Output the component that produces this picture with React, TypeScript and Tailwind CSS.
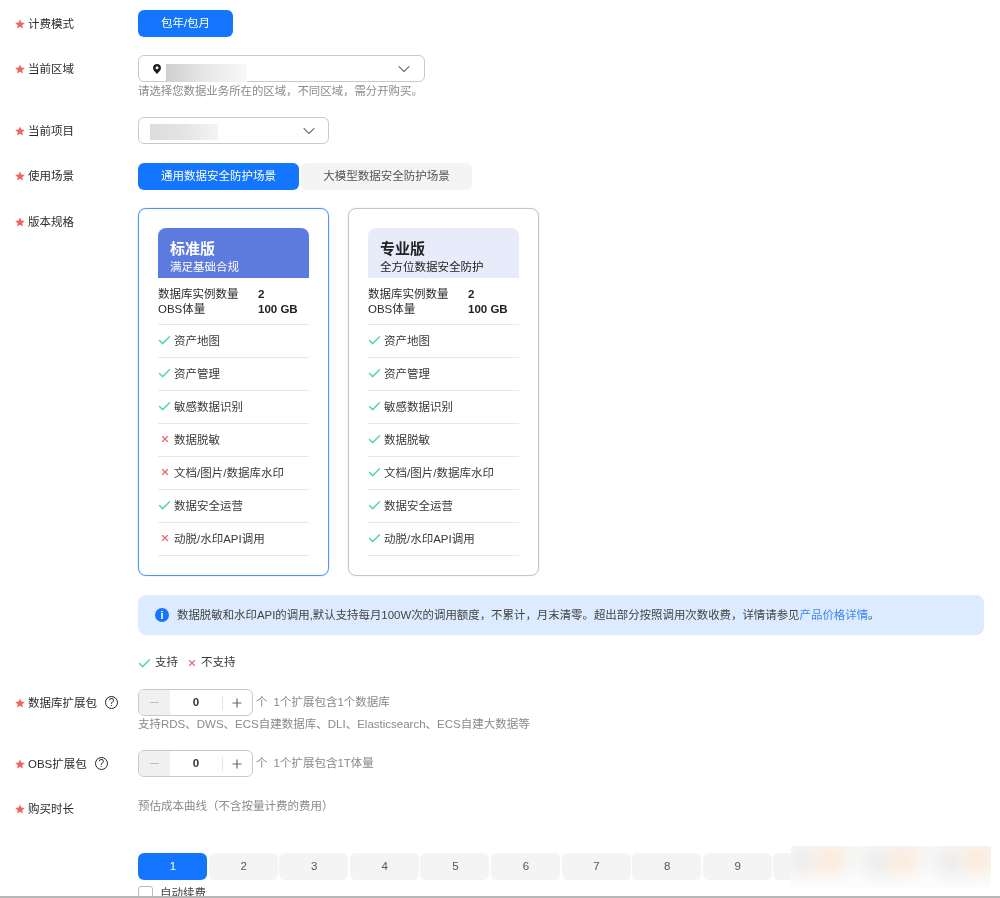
import React from "react";
import { Check, X, ChevronDown, Minus, Plus } from "lucide-react";

const font = "font-['Liberation_Sans','Noto_Sans_CJK_SC',sans-serif]";

function Star() {
  return (
    <svg width="10" height="10" viewBox="0 0 24 24" className="shrink-0 mr-[2px]">
      <path d="M12 1l3.2 7.6 8.3.7-6.3 5.4 1.9 8.1L12 18.5l-7.1 4.3 1.9-8.1L.5 9.3l8.3-.7z" fill="#f4645f" />
    </svg>
  );
}

function Label({ text, help }: { text: string; help?: boolean }) {
  return (
    <div className="w-[138px] shrink-0 pl-[15px] flex items-center text-[11.5px] leading-[16px] text-[#2b2b2b]">
      <Star />
      <span className="ml-[1px] whitespace-nowrap">{text}</span>
      {help && (
        <span className="ml-[8px] w-[13px] h-[13px] rounded-full border border-[#222] flex items-center justify-center text-[10px] leading-none">?</span>
      )}
    </div>
  );
}

const features = ["资产地图", "资产管理", "敏感数据识别", "数据脱敏", "文档/图片/数据库水印", "数据安全运营", "动脱/水印API调用"];

function Yes() {
  return <Check size={15} strokeWidth={2.4} className="text-[#5dd5a8] shrink-0" />;
}
function No() {
  return <X size={10} strokeWidth={2.6} className="text-[#e8636b] shrink-0" />;
}

function Card({ title, sub, active, yes }: { title: string; sub: string; active: boolean; yes: boolean[] }) {
  return (
    <div className={`w-[191px] h-[368px] rounded-[8px] border px-[19px] pt-[19px] ${active ? "border-[#4d94ff] shadow-[0_0_1px_#4d94ff]" : "border-[#c4c4c4] shadow-[0_0_1px_#c4c4c4]"}`}>
      <div className={`h-[50px] rounded-t-[8px] pl-[12px] pt-[11px] ${active ? "bg-[#5d7bdf] text-white" : "bg-[#e8ecfa] text-[#222]"}`}>
        <div className="text-[15px] leading-[20px] font-bold">{title}</div>
        <div className="text-[11.5px] leading-[16px] whitespace-nowrap">{sub}</div>
      </div>
      <div className="h-[47px] border-b border-[#e8e8e8] pt-[9px] text-[11.5px] leading-[15px] text-[#2b2b2b]">
        <div className="flex"><span className="w-[100px]">数据库实例数量</span><b className="text-[#222]">2</b></div>
        <div className="flex"><span className="w-[100px]">OBS体量</span><b className="text-[#222]">100 GB</b></div>
      </div>
      {features.map((f, i) => (
        <div key={f} className="h-[33px] border-b border-[#e8e8e8] flex items-center gap-[3px] text-[11.5px] text-[#3a3a3a]">
          <span className="w-[13px] flex justify-center pb-[2px]">{yes[i] ? <Yes /> : <No />}</span>
          <span className="whitespace-nowrap pt-[1px]">{f}</span>
        </div>
      ))}
    </div>
  );
}

function Stepper() {
  return (
    <div className="w-[115px] h-[27px] rounded-[6px] border border-[#c9c9c9] flex items-center overflow-hidden">
      <div className="w-[31px] h-full bg-[#f0f0f0] flex items-center justify-center"><Minus size={13} className="text-[#bbb]" /></div>
      <div className="w-[52px] text-center text-[11.5px] font-bold text-[#333]">0</div>
      <div className="w-px h-[14px] bg-[#e3e3e3]" />
      <div className="flex-1 flex items-center justify-center pr-[1px]"><Plus size={14} className="text-[#666]" /></div>
    </div>
  );
}

function Pin() {
  return (
    <svg width="8" height="10" viewBox="0 0 8 10" className="shrink-0">
      <path d="M4 0C1.8 0 0 1.7 0 3.9C0 6.2 2.6 8.4 4 10C5.4 8.4 8 6.2 8 3.9C8 1.7 6.2 0 4 0Z" fill="#1f1f1f" />
      <circle cx="4" cy="3.8" r="1.5" fill="#fff" />
    </svg>
  );
}

export default function App() {
  const nums = ["1", "2", "3", "4", "5", "6", "7", "8", "9"];
  return (
    <div className={`${font} relative h-[898px] w-[1000px] overflow-hidden bg-white flex flex-col`}>
      <div className="flex-1 overflow-hidden pt-[10px] blur-[0.3px]">
        <div className="flex items-center h-[27px]">
          <Label text="计费模式" />
          <div className="w-[95px] h-[27px] rounded-[6px] bg-[#1476ff] text-white text-[11.5px] flex items-center justify-center">包年/包月</div>
        </div>

        <div className="flex mt-[18px]">
          <div className="h-[28px] flex items-center"><Label text="当前区域" /></div>
          <div>
            <div className="w-[287px] h-[27px] rounded-[6px] border border-[#c9c9c9] flex items-center pl-[14px] pr-[10px]">
              <Pin />
              <div className="ml-[5px] w-[81px] h-[18px] mt-[9px] bg-gradient-to-r from-[#cfcfcf] via-[#e8e8e8] to-[#f8f8f8]" />
              <ChevronDown size={20} strokeWidth={1.3} className="ml-auto text-[#777]" />
            </div>
            <div className="mt-[1px] text-[11.4px] leading-[16px] text-[#8a8a8a] whitespace-nowrap">请选择您数据业务所在的区域，不同区域，需分开购买。</div>
          </div>
        </div>

        <div className="flex items-center mt-[18px]">
          <Label text="当前项目" />
          <div className="w-[191px] h-[27px] rounded-[6px] border border-[#c9c9c9] flex items-center pl-[11px] pr-[9px]">
            <div className="w-[68px] h-[16px] mt-[2px] bg-gradient-to-r from-[#dcdcdc] via-[#e4e4e4] to-[#f4f4f4]" />
            <ChevronDown size={20} strokeWidth={1.3} className="ml-auto text-[#777]" />
          </div>
        </div>

        <div className="flex mt-[19px]">
          <div className="h-[25px] flex items-center"><Label text="使用场景" /></div>
          <div className="w-[161px] h-[27px] rounded-[6px] bg-[#1476ff] text-white text-[11.5px] flex items-center justify-center">通用数据安全防护场景</div>
          <div className="ml-[2px] w-[171px] h-[27px] rounded-[6px] bg-[#f4f4f4] text-[#555] text-[11.5px] flex items-center justify-center">大模型数据安全防护场景</div>
        </div>

        <div className="flex mt-[18px]">
          <div className="h-[27px] flex items-center"><Label text="版本规格" /></div>
          <div className="flex gap-[19px]">
            <Card title="标准版" sub="满足基础合规" active yes={[true, true, true, false, false, true, false]} />
            <Card title="专业版" sub="全方位数据安全防护" active={false} yes={[true, true, true, true, true, true, true]} />
          </div>
        </div>

        <div className="ml-[138px] mt-[19px] w-[846px] h-[40px] rounded-[8px] bg-[#dcebff] flex items-center pl-[17px] text-[11.43px] text-[#444]">
          <span className="w-[14px] h-[14px] rounded-full bg-[#1476ff] text-white text-[11px] font-bold flex items-center justify-center">i</span>
          <span className="ml-[8px] pt-[1px] whitespace-nowrap">
            数据脱敏和水印API的调用,默认支持每月100W次的调用额度，不累计，月末清零。超出部分按照调用次数收费，详情请参见<span className="text-[#3d86f5]">产品价格详情</span>。
          </span>
        </div>

        <div className="ml-[137px] mt-[20px] h-[16px] flex items-center text-[11.5px] text-[#3a3a3a]">
          <Yes />
          <span className="ml-[3px]">支持</span>
          <span className="ml-[9px] pb-[1px]"><No /></span>
          <span className="ml-[4px]">不支持</span>
        </div>

        <div className="flex mt-[18px]">
          <div className="h-[27px] flex items-center"><Label text="数据库扩展包" help /></div>
          <div>
            <div className="flex items-center text-[11.5px] text-[#888]">
              <Stepper />
              <span className="ml-[3px]">个</span>
              <span className="ml-[6px]">1个扩展包含1个数据库</span>
            </div>
            <div className="text-[11.5px] leading-[16px] text-[#8a8a8a] whitespace-nowrap">支持RDS、DWS、ECS自建数据库、DLI、Elasticsearch、ECS自建大数据等</div>
          </div>
        </div>

        <div className="flex items-center mt-[18px]">
          <Label text="OBS扩展包" help />
          <div className="flex items-center text-[11.5px] text-[#888]">
            <Stepper />
            <span className="ml-[3px]">个</span>
            <span className="ml-[6px]">1个扩展包含1T体量</span>
          </div>
        </div>

        <div className="flex mt-[20px] h-[56px]">
          <div className="h-[22px] mt-[1px] flex items-center"><Label text="购买时长" /></div>
          <div className="pt-[1px] text-[11.5px] leading-[16px] text-[#8a8a8a]">预估成本曲线（不含按量计费的费用）</div>
        </div>

        <div className="ml-[138px] flex gap-[1.6px]">
          {nums.map((n, i) => (
            <div key={n} className={`w-[69px] shrink-0 h-[27px] rounded-[6px] pl-[1px] flex items-center justify-center text-[11.5px] ${i === 0 ? "bg-[#1476ff] text-white" : "bg-[#f4f4f4] text-[#555]"}`}>{n}</div>
          ))}
          <div className="w-[69px] shrink-0 h-[27px] rounded-[6px] bg-[#f4f4f4]" />
        </div>

        <div className="ml-[138px] mt-[5px] flex items-center text-[11.5px] text-[#444]">
          <span className="w-[15px] h-[15px] rounded-[3px] border border-[#bbb]" />
          <span className="ml-[7px]">自动续费</span>
        </div>
      </div>
      <div className="h-[2px] shrink-0 bg-[#b8b8b8]" />
      <div className="absolute left-[791px] top-[846px] w-[200px] h-[42px] overflow-hidden bg-gradient-to-b from-[#f7f7f7] to-[#fdfdfd]">
        <span className="absolute left-[-4px] top-[2px] w-[30px] h-[26px] rounded-full blur-[8px] bg-[#ececec]" />
        <span className="absolute left-[22px] top-[0px] w-[34px] h-[28px] rounded-full blur-[8px] bg-[#fbeadb]" />
        <span className="absolute left-[72px] top-[4px] w-[30px] h-[26px] rounded-full blur-[8px] bg-[#ececec]" />
        <span className="absolute left-[96px] top-[0px] w-[32px] h-[28px] rounded-full blur-[8px] bg-[#fbeadb]" />
        <span className="absolute left-[144px] top-[4px] w-[30px] h-[26px] rounded-full blur-[8px] bg-[#ececec]" />
        <span className="absolute left-[170px] top-[0px] w-[34px] h-[28px] rounded-full blur-[8px] bg-[#fbeadb]" />
      </div>
    </div>
  );
}
